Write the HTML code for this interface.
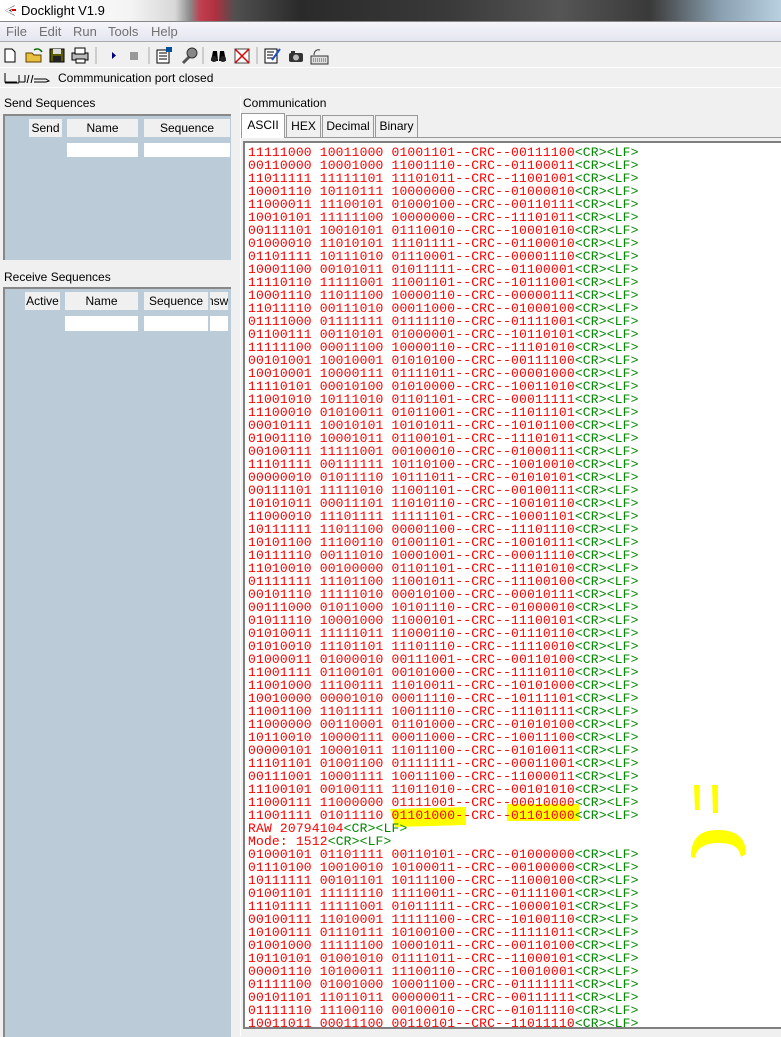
<!DOCTYPE html>
<html><head><meta charset="utf-8">
<style>
*{margin:0;padding:0;box-sizing:border-box}
body{width:781px;height:1035px;overflow:hidden;background:#f0f0f0;font-family:"Liberation Sans",sans-serif;font-size:12px;position:relative;color:#000}
.abs{position:absolute}
#title{left:0;top:0;width:781px;height:21px;background:linear-gradient(90deg,#fff 0,#f4f4f4 130px,#d8d8d8 175px,#8a8a8a 190px,#c04050 200px,#b03040 215px,#505050 235px,#2a2a2a 300px,#3a3a3a 450px,#555 560px,#3a3a3a 650px,#8aa0b0 720px,#b8d0e0 781px)}
#title span{position:absolute;left:21px;top:3px;font-size:13px}
#menu{left:0;top:21px;width:781px;height:21px;background:linear-gradient(#f5f5fa,#e4e6f0);border-top:1px solid #888;border-bottom:1px solid #aaa}
#menu span{position:absolute;top:2px;color:#707070;font-size:13px}
#tb{left:0;top:43px;width:781px;height:24px;background:#f0f0f0}
#status{left:0;top:67px;width:781px;height:21px;border-top:1px solid #fff;border-bottom:1px solid #fff}
.hdr{position:absolute;background:#f0f0f0;text-align:center;font-size:12px;line-height:18px}
.inp{position:absolute;background:#fff}
.panel{position:absolute;background:#bccbd8;border-top:2px solid #888;border-left:2px solid #888}
#log{left:243px;top:141px;width:540px;height:888px;background:#fff;border-top:2px solid #808080;border-left:2px solid #808080;border-bottom:2px solid #808080;overflow:hidden}
#log pre{position:absolute;left:3px;top:3px;font-family:"Liberation Mono",monospace;font-size:13px;letter-spacing:0.17px;line-height:13px;color:#f00}
#log i{font-style:normal;color:#080}
.tab{position:absolute;top:115px;height:22px;border:1px solid #999;border-bottom:none;background:#f0f0f0;font-size:12px;line-height:20px;text-align:center}
</style></head><body>
<div id="title" class="abs">
<svg class="abs" style="left:2px;top:3px" width="16" height="15"><path d="M13 2 L3 7.5 L13 13 L9 7.5Z" fill="#444"/><path d="M12 4 L5 7.5 L12 11" fill="none" stroke="#fff" stroke-width="1.5"/><path d="M10 7 h4" stroke="#c00" stroke-width="2"/></svg>
<span>Docklight V1.9</span></div>
<div id="menu" class="abs"><span style="left:6px">File</span><span style="left:39px">Edit</span><span style="left:73px">Run</span><span style="left:108px">Tools</span><span style="left:151px">Help</span></div>
<div id="tb" class="abs">
<svg width="400" height="24">
<path d="M5 6h7l3 3v10H5z" fill="#fff" stroke="#000"/>
<path d="M26 10h6l2 2h7v7H26z" fill="#e8c040" stroke="#604000"/><path d="M34 7c3-2 6-1 8 2" fill="none" stroke="#060" stroke-width="1.5"/>
<rect x="50" y="6" width="14" height="13" fill="#5a5a00" stroke="#000"/><rect x="53" y="6" width="8" height="5" fill="#ddd"/><rect x="53" y="13" width="8" height="6" fill="#222"/>
<rect x="72" y="10" width="16" height="7" fill="#bbb" stroke="#000"/><rect x="75" y="5" width="10" height="6" fill="#fff" stroke="#000"/><rect x="76" y="16" width="9" height="4" fill="#fff" stroke="#000"/>
<line x1="96" y1="4" x2="96" y2="21" stroke="#aaa"/>
<path d="M112 9l4 3.5-4 3.5z" fill="#000080"/>
<rect x="130" y="9" width="8" height="8" fill="#999"/>
<line x1="149" y1="4" x2="149" y2="21" stroke="#aaa"/>
<rect x="157" y="7" width="12" height="13" fill="#fff" stroke="#000"/><path d="M159 10h8M159 13h8M159 16h8" stroke="#000"/><rect x="166" y="4" width="6" height="5" fill="#0050a0"/>
<path d="M183 20l6-6" stroke="#555" stroke-width="3"/><circle cx="192" cy="10" r="5" fill="#888" stroke="#333"/>
<line x1="203" y1="4" x2="203" y2="21" stroke="#aaa"/>
<path d="M211 18l2-10h4l1 10zM219 18l1-10h4l2 10z" fill="#000"/><circle cx="214" cy="16" r="3" fill="#222"/><circle cx="223" cy="16" r="3" fill="#222"/>
<rect x="235" y="6" width="14" height="14" fill="#fff" stroke="#444"/><path d="M235 6l14 14M249 6l-14 14" stroke="#d00" stroke-width="1.5"/>
<line x1="257" y1="4" x2="257" y2="21" stroke="#aaa"/>
<rect x="265" y="6" width="12" height="14" fill="#fff" stroke="#000"/><path d="M267 9h7M267 12h6M267 15h7" stroke="#000"/><path d="M272 17l8-11" stroke="#2050c0" stroke-width="2"/>
<rect x="289" y="10" width="14" height="9" rx="2" fill="#333"/><circle cx="296" cy="14.5" r="3" fill="#bbb"/><rect x="291" y="8" width="4" height="3" fill="#333"/>
<rect x="311" y="13" width="17" height="8" fill="#ddd" stroke="#333"/><path d="M313 16h13M313 18h13" stroke="#555" stroke-dasharray="1 1"/><path d="M314 12c0-4 3-6 6-5" fill="none" stroke="#333"/>
</svg></div>
<div id="status" class="abs">
<svg class="abs" style="left:3px;top:3px" width="50" height="14"><path d="M2 2v9h12M12 11H2M16 4v7h6M22 4v7M26 4l-2 8M30 4l-2 8M31 8h12l3 2-3 1H31" fill="none" stroke="#000"/><path d="M2 12h14" stroke="#000"/></svg>
<span class="abs" style="left:58px;top:3px;font-size:12px">Commmunication port closed</span></div>
<span class="abs" style="left:4px;top:96px">Send Sequences</span>
<span class="abs" style="left:243px;top:96px">Communication</span>
<div class="panel" style="left:3px;top:114px;width:228px;height:146px"></div>
<div class="hdr" style="left:29px;top:119px;width:33px">Send</div>
<div class="hdr" style="left:67px;top:119px;width:71px">Name</div>
<div class="hdr" style="left:144px;top:119px;width:86px">Sequence</div>
<div class="inp" style="left:67px;top:143px;width:71px;height:14px"></div>
<div class="inp" style="left:144px;top:143px;width:86px;height:14px"></div>
<span class="abs" style="left:4px;top:270px">Receive Sequences</span>
<div class="panel" style="left:3px;top:287px;width:228px;height:750px"></div>
<div class="hdr" style="left:25px;top:292px;width:35px">Active</div>
<div class="hdr" style="left:65px;top:292px;width:73px">Name</div>
<div class="hdr" style="left:144px;top:292px;width:64px">Sequence</div>
<div class="hdr" style="left:210px;top:292px;width:18px;overflow:hidden;text-indent:-3px">nsw</div>
<div class="inp" style="left:65px;top:316px;width:73px;height:15px"></div>
<div class="inp" style="left:144px;top:316px;width:64px;height:15px"></div>
<div class="inp" style="left:210px;top:316px;width:18px;height:15px"></div>
<div class="abs" style="left:240px;top:96px;width:1px;height:940px;background:#fff"></div>
<div class="tab" style="left:241px;top:113px;height:25px;width:44px;background:#fff;line-height:22px;z-index:2">ASCII</div>
<div class="tab" style="left:286px;width:35px">HEX</div>
<div class="tab" style="left:322px;width:52px">Decimal</div>
<div class="tab" style="left:375px;width:43px">Binary</div>
<div class="abs" style="left:242px;top:137px;width:540px;height:1px;background:#999"></div>
<div id="log" class="abs">
<svg class="abs" style="left:0;top:0" width="540" height="888">
<path d="M145 666 L221 664 L221 682 L150 684 Z" fill="#ffff00"/>
<path d="M262 661 L334 661 L334 678 L262 678Z" fill="#ffff00"/>
<path d="M449 642 l6 0 l-1 25 l-4 0z M467 642 l6 0 l0 28 l-5 0z" fill="#ffff00"/>
<path d="M446 714 c0-20 10-27 27-27 c16 0 28 6 28 24 l-5 3 c-2-10-8-14-23-14 c-14 0-22 6-23 15z" fill="#ffff00"/>
</svg>
<pre>11111000 10011000 01001101--CRC--00111100<i>&lt;CR&gt;&lt;LF&gt;</i>
00110000 10001000 11001110--CRC--01100011<i>&lt;CR&gt;&lt;LF&gt;</i>
11011111 11111101 11101011--CRC--11001001<i>&lt;CR&gt;&lt;LF&gt;</i>
10001110 10110111 10000000--CRC--01000010<i>&lt;CR&gt;&lt;LF&gt;</i>
11000011 11100101 01000100--CRC--00110111<i>&lt;CR&gt;&lt;LF&gt;</i>
10010101 11111100 10000000--CRC--11101011<i>&lt;CR&gt;&lt;LF&gt;</i>
00111101 10010101 01110010--CRC--10001010<i>&lt;CR&gt;&lt;LF&gt;</i>
01000010 11010101 11101111--CRC--01100010<i>&lt;CR&gt;&lt;LF&gt;</i>
01101111 10111010 01110001--CRC--00001110<i>&lt;CR&gt;&lt;LF&gt;</i>
10001100 00101011 01011111--CRC--01100001<i>&lt;CR&gt;&lt;LF&gt;</i>
11110110 11111001 11001101--CRC--10111001<i>&lt;CR&gt;&lt;LF&gt;</i>
10001110 11011100 10000110--CRC--00000111<i>&lt;CR&gt;&lt;LF&gt;</i>
11011110 00111010 00011000--CRC--01000100<i>&lt;CR&gt;&lt;LF&gt;</i>
01111000 01111111 01111110--CRC--01111001<i>&lt;CR&gt;&lt;LF&gt;</i>
01100111 00110101 01000001--CRC--10110101<i>&lt;CR&gt;&lt;LF&gt;</i>
11111100 00011100 10000110--CRC--11101010<i>&lt;CR&gt;&lt;LF&gt;</i>
00101001 10010001 01010100--CRC--00111100<i>&lt;CR&gt;&lt;LF&gt;</i>
10010001 10000111 01111011--CRC--00001000<i>&lt;CR&gt;&lt;LF&gt;</i>
11110101 00010100 01010000--CRC--10011010<i>&lt;CR&gt;&lt;LF&gt;</i>
11001010 10111010 01101101--CRC--00011111<i>&lt;CR&gt;&lt;LF&gt;</i>
11100010 01010011 01011001--CRC--11011101<i>&lt;CR&gt;&lt;LF&gt;</i>
00010111 10010101 10101011--CRC--10101100<i>&lt;CR&gt;&lt;LF&gt;</i>
01001110 10001011 01100101--CRC--11101011<i>&lt;CR&gt;&lt;LF&gt;</i>
00100111 11111001 00100010--CRC--01000111<i>&lt;CR&gt;&lt;LF&gt;</i>
11101111 00111111 10110100--CRC--10010010<i>&lt;CR&gt;&lt;LF&gt;</i>
00000010 01011110 10111011--CRC--01010101<i>&lt;CR&gt;&lt;LF&gt;</i>
00111101 11111010 11001101--CRC--00100111<i>&lt;CR&gt;&lt;LF&gt;</i>
10101011 00011101 11010110--CRC--10010110<i>&lt;CR&gt;&lt;LF&gt;</i>
11000010 11101111 11111101--CRC--10001101<i>&lt;CR&gt;&lt;LF&gt;</i>
10111111 11011100 00001100--CRC--11101110<i>&lt;CR&gt;&lt;LF&gt;</i>
10101100 11100110 01001101--CRC--10010111<i>&lt;CR&gt;&lt;LF&gt;</i>
10111110 00111010 10001001--CRC--00011110<i>&lt;CR&gt;&lt;LF&gt;</i>
11010010 00100000 01101101--CRC--11101010<i>&lt;CR&gt;&lt;LF&gt;</i>
01111111 11101100 11001011--CRC--11100100<i>&lt;CR&gt;&lt;LF&gt;</i>
00101110 11111010 00010100--CRC--00010111<i>&lt;CR&gt;&lt;LF&gt;</i>
00111000 01011000 10101110--CRC--01000010<i>&lt;CR&gt;&lt;LF&gt;</i>
01011110 10001000 11000101--CRC--11100101<i>&lt;CR&gt;&lt;LF&gt;</i>
01010011 11111011 11000110--CRC--01110110<i>&lt;CR&gt;&lt;LF&gt;</i>
01010010 11101101 11101110--CRC--11110010<i>&lt;CR&gt;&lt;LF&gt;</i>
01000011 01000010 00111001--CRC--00110100<i>&lt;CR&gt;&lt;LF&gt;</i>
11001111 01100101 00101000--CRC--11110110<i>&lt;CR&gt;&lt;LF&gt;</i>
11001000 11100111 11010011--CRC--10101000<i>&lt;CR&gt;&lt;LF&gt;</i>
10010000 00001010 00011110--CRC--10111101<i>&lt;CR&gt;&lt;LF&gt;</i>
11001100 11011111 10011110--CRC--11101111<i>&lt;CR&gt;&lt;LF&gt;</i>
11000000 00110001 01101000--CRC--01010100<i>&lt;CR&gt;&lt;LF&gt;</i>
10110010 10000111 00011000--CRC--10011100<i>&lt;CR&gt;&lt;LF&gt;</i>
00000101 10001011 11011100--CRC--01010011<i>&lt;CR&gt;&lt;LF&gt;</i>
11101101 01001100 01111111--CRC--00011001<i>&lt;CR&gt;&lt;LF&gt;</i>
00111001 10001111 10011100--CRC--11000011<i>&lt;CR&gt;&lt;LF&gt;</i>
11100101 00100111 11011010--CRC--00101010<i>&lt;CR&gt;&lt;LF&gt;</i>
11000111 11000000 01111001--CRC--00010000<i>&lt;CR&gt;&lt;LF&gt;</i>
11001111 01011110 01101000--CRC--01101000<i>&lt;CR&gt;&lt;LF&gt;</i>
RAW 20794104<i>&lt;CR&gt;&lt;LF&gt;</i>
Mode: 1512<i>&lt;CR&gt;&lt;LF&gt;</i>
01000101 01101111 00110101--CRC--01000000<i>&lt;CR&gt;&lt;LF&gt;</i>
01110100 10010010 10100011--CRC--00100000<i>&lt;CR&gt;&lt;LF&gt;</i>
10111111 00101101 10111100--CRC--11000100<i>&lt;CR&gt;&lt;LF&gt;</i>
01001101 11111110 11110011--CRC--01111001<i>&lt;CR&gt;&lt;LF&gt;</i>
11101111 11111001 01011111--CRC--10000101<i>&lt;CR&gt;&lt;LF&gt;</i>
00100111 11010001 11111100--CRC--10100110<i>&lt;CR&gt;&lt;LF&gt;</i>
10100111 01110111 10100100--CRC--11111011<i>&lt;CR&gt;&lt;LF&gt;</i>
01001000 11111100 10001011--CRC--00110100<i>&lt;CR&gt;&lt;LF&gt;</i>
10110101 01001010 01111011--CRC--11000101<i>&lt;CR&gt;&lt;LF&gt;</i>
00001110 10100011 11100110--CRC--10010001<i>&lt;CR&gt;&lt;LF&gt;</i>
01111100 01001000 10001100--CRC--01111111<i>&lt;CR&gt;&lt;LF&gt;</i>
00101101 11011011 00000011--CRC--00111111<i>&lt;CR&gt;&lt;LF&gt;</i>
01111110 11100110 00100010--CRC--01011110<i>&lt;CR&gt;&lt;LF&gt;</i>
10011011 00011100 00110101--CRC--11011110<i>&lt;CR&gt;&lt;LF&gt;</i></pre>
</div>
</body></html>
